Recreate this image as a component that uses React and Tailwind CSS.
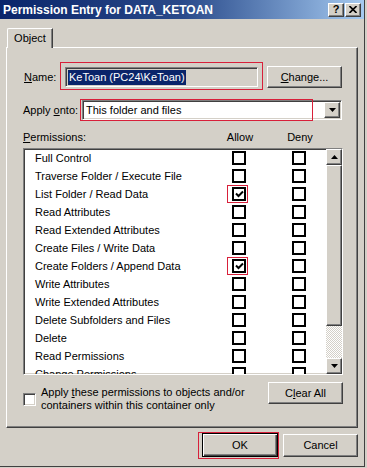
import React from 'react';

const perms = [
  ['Full Control', false],
  ['Traverse Folder / Execute File', false],
  ['List Folder / Read Data', true],
  ['Read Attributes', false],
  ['Read Extended Attributes', false],
  ['Create Files / Write Data', false],
  ['Create Folders / Append Data', true],
  ['Write Attributes', false],
  ['Write Extended Attributes', false],
  ['Delete Subfolders and Files', false],
  ['Delete', false],
  ['Read Permissions', false],
  ['Change Permissions', false],
];

const raised =
  'border border-t-white border-l-white border-r-[#404040] border-b-[#404040] shadow-[inset_-1px_-1px_0_#808080]';
const sunken =
  'border border-t-[#808080] border-l-[#808080] border-r-white border-b-white shadow-[inset_1px_1px_0_#404040,inset_-1px_-1px_0_#d4d0c8]';

function Box({ checked, marked }) {
  return (
    <div className="relative w-[14px] h-[14px]">
      <div className="w-[14px] h-[14px] border-2 border-black bg-white flex items-center justify-center">
        {checked && (
          <svg width="9" height="8" viewBox="0 0 9 8">
            <path d="M1 3.5 L3.5 6 L8 1.5" stroke="black" strokeWidth="2" fill="none" />
          </svg>
        )}
      </div>
      {marked && (
        <div className="absolute -left-[5px] -right-[2px] -top-[2px] -bottom-[2px] border border-[#d8203a]" />
      )}
    </div>
  );
}

function Arrow({ up }) {
  return (
    <div className={`w-[16px] h-[16px] bg-[#d4d0c8] flex items-center justify-center ${raised}`}>
      <svg width="7" height="4" viewBox="0 0 7 4">
        <polygon points={up ? '3.5,0 7,4 0,4' : '0,0 7,0 3.5,4'} fill="black" />
      </svg>
    </div>
  );
}

export default function App() {
  return (
    <div className="w-[367px] h-[468px] bg-[#d4d0c8] overflow-hidden text-[11px] text-black font-['Liberation_Sans',Arial,sans-serif]">
      <div className="w-[365px] h-[467px] flex flex-col border-r border-b border-[#404040]">
        {/* title bar */}
        <div className="h-[19px] flex items-center justify-between pl-[3px] pr-[3px] bg-gradient-to-r from-[#0a246a] via-[#2a4a8a] to-[#a6caf0]">
          <span className="text-white font-bold text-[12px]">Permission Entry for DATA_KETOAN</span>
          <div className="flex gap-[1px]">
            <div className={`w-[16px] h-[14px] bg-[#d4d0c8] flex items-center justify-center font-bold text-[11px] leading-none ${raised}`}>?</div>
            <div className={`w-[16px] h-[14px] bg-[#d4d0c8] flex items-center justify-center ${raised}`}>
              <svg width="8" height="7" viewBox="0 0 8 7">
                <path d="M0.5 0 L7.5 7 M7.5 0 L0.5 7" stroke="black" strokeWidth="1.6" />
              </svg>
            </div>
          </div>
        </div>

        {/* tab */}
        <div className="mt-[9px] ml-[7px] -mb-[1px] relative z-10">
          <div className="w-[46px] h-[20px] bg-[#d4d0c8] border-t border-l border-r border-t-white border-l-white border-r-[#404040] shadow-[inset_-1px_0_0_#808080] rounded-tl-[2px] flex items-center justify-center pb-[1px]">
            Object
          </div>
        </div>

        {/* panel */}
        <div className={`ml-[6px] w-[352px] h-[381px] flex flex-col ${raised}`}>
          {/* name row */}
          <div className="mt-[17px] h-[24px] flex items-center pl-[17px]">
            <span className="w-[41px]"><u>N</u>ame:</span>
            <div className="relative">
              <div className={`w-[193px] h-[20px] bg-[#d4d0c8] flex items-center pl-[2px] ${sunken}`}>
                <span className="bg-[#0a246a] text-white px-[1px] leading-[15px]">KeToan (PC24\KeToan)</span>
              </div>
              <div className="absolute -left-[5px] -right-[5px] -top-[5px] -bottom-[3px] border border-[#d8203a]" />
            </div>
            <div className={`ml-[9px] w-[75px] h-[22px] flex items-center justify-center ${raised}`}>
              <span><u>C</u>hange...</span>
            </div>
          </div>

          {/* apply onto */}
          <div className="mt-[10px] h-[22px] flex items-center pl-[16px]">
            <span className="w-[59px]">Apply <u>o</u>nto:</span>
            <div className="relative">
              <div className={`w-[260px] h-[20px] bg-white flex items-center justify-between pl-[3px] pr-[1px] ${sunken}`}>
                <span>This folder and files</span>
                <Arrow />
              </div>
              <div className="absolute -left-[2px] w-[233px] -top-[1px] -bottom-[1px] border border-[#d8203a]" />
            </div>
          </div>

          {/* header */}
          <div className="mt-[9px] h-[14px] flex items-center pl-[16px]">
            <span className="w-[202px]"><u>P</u>ermissions:</span>
            <span className="w-[30px] text-center">Allow</span>
            <span className="ml-[30px] w-[30px] text-center">Deny</span>
          </div>

          {/* list */}
          <div className={`mt-[4px] ml-[16px] w-[320px] h-[227px] bg-white flex ${sunken}`}>
            <div className="flex-1 overflow-hidden">
              <div className="flex flex-col">
                {perms.map(([name, checked]) => (
                  <div key={name} className="h-[18px] shrink-0 flex items-center pl-[11px]">
                    <span className="w-[197px] whitespace-nowrap">{name}</span>
                    <Box checked={checked} marked={checked} />
                    <div className="ml-[46px]">
                      <Box />
                    </div>
                  </div>
                ))}
              </div>
            </div>
            <div className="w-[16px] flex flex-col">
              <Arrow up />
              <div className={`h-[161px] bg-[#d4d0c8] ${raised}`} />
              <div className="flex-1 bg-[repeating-conic-gradient(#ffffff_0_25%,#d4d0c8_0_50%)] bg-[length:2px_2px]" />
              <Arrow />
            </div>
          </div>

          {/* bottom row */}
          <div className="mt-[7px] flex items-start pl-[16px] pr-[14px]">
            <div className={`mt-[11px] w-[13px] h-[13px] bg-white ${sunken}`} />
            <div className="ml-[5px] mt-[4px] leading-[13px]">
              <div>Apply <u>t</u>hese permissions to objects and/or</div>
              <div>containers within this container only</div>
            </div>
            <div className={`ml-auto w-[75px] h-[22px] flex items-center justify-center ${raised}`}>
              <span>C<u>l</u>ear All</span>
            </div>
          </div>
        </div>

        {/* dialog buttons */}
        <div className="mt-[5px] flex justify-end items-start gap-[5px] pr-[6px]">
          <div className="relative">
            <div className="w-[76px] h-[24px] border border-black flex items-center justify-center shadow-[inset_1px_1px_0_#fff,inset_-1px_-1px_0_#404040,inset_-2px_-2px_0_#808080]">
              OK
            </div>
            <div className="absolute -left-[4px] -right-[1px] -top-[1px] -bottom-[2px] border border-[#d8203a]" />
          </div>
          <div className={`mt-[1px] w-[75px] h-[23px] flex items-center justify-center ${raised}`}>
            Cancel
          </div>
        </div>
      </div>
    </div>
  );
}
